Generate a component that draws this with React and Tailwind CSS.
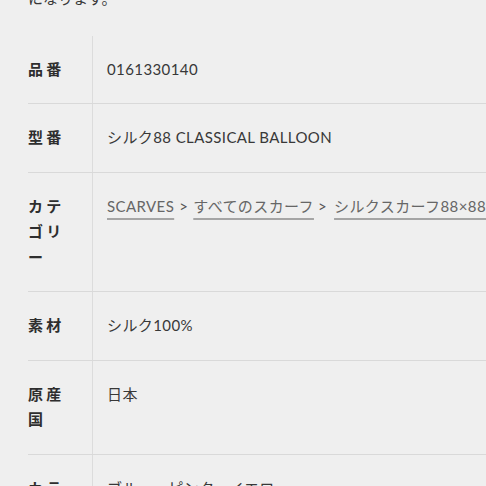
const font = "font-['Lato','Noto_Sans_CJK_JP',sans-serif]";

const rows = [
  { label: "品番", value: "0161330140" },
  { label: "型番", value: "シルク88 CLASSICAL BALLOON" },
  { label: "カテゴリー", value: "breadcrumb" },
  { label: "素材", value: "シルク100%" },
  { label: "原産国", value: "日本" },
  { label: "カラー", value: "ブルー、ピンク、イエロー" },
];

function Crumb({ children }) {
  return (
    <a className="text-[#666] underline decoration-[#a5a5a5] decoration-[1.5px] underline-offset-[6px]">
      {children}
    </a>
  );
}

function Breadcrumb() {
  return (
    <span className="whitespace-nowrap">
      <Crumb>SCARVES</Crumb>
      <span className="mx-[5px] text-[#555]">&gt;</span>
      <Crumb>すべてのスカーフ</Crumb>
      <span className="ml-[4px] mr-[7px] text-[#555]">&gt;</span>
      <Crumb>シルクスカーフ88×88</Crumb>
    </span>
  );
}

export default function App() {
  return (
    <div className={`w-[486px] h-[486px] overflow-hidden bg-[#efefef] text-[#383838] text-[15px] leading-[25.5px] ${font}`}>
      <div className="pl-[28px]">
        <p className="mt-[-14px] mb-[24px]">になります。</p>

        <div className="w-[700px]">
          {rows.map((r) => (
            <div key={r.label} className="flex border-b border-[#d9d9d9]">
              <div className="w-[65px] shrink-0 border-r border-[#dcdcdc] py-[21px] pr-[18px] font-semibold tracking-[0.22em] text-[#2e2e2e]">
                {r.label}
              </div>
              <div className="flex-1 py-[21px] pl-[14px] tracking-[0.4px]">
                {r.value === "breadcrumb" ? <Breadcrumb /> : r.value}
              </div>
            </div>
          ))}
        </div>
      </div>
    </div>
  );
}
